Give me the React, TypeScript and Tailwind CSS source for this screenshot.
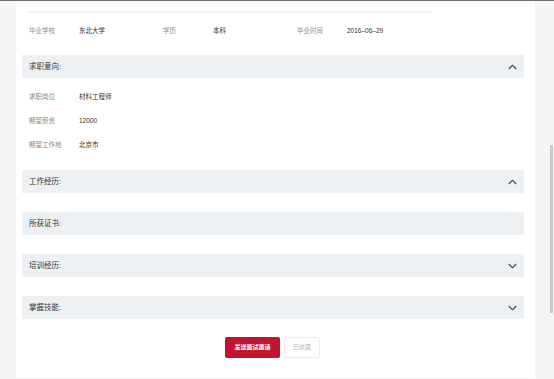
const font = "font-['Liberation_Sans','Noto_Sans_CJK_SC',sans-serif]";

const Chevron = ({ up }: { up?: boolean }) => (
  <svg width="9" height="6" viewBox="0 0 9 6" className="mr-[7px]">
    <path
      d={up ? "M0.8 5 L4.5 1.2 L8.2 5" : "M0.8 1 L4.5 4.8 L8.2 1"}
      fill="none"
      stroke="#3a3a3a"
      strokeWidth="1.1"
    />
  </svg>
);

const Header = ({ title, icon, className = "" }: { title: string; icon?: "up" | "down"; className?: string }) => (
  <div className={`ml-[6px] mr-[11px] h-[23px] bg-[#eef1f4] flex items-center justify-between pl-[7px] ${className}`}>
    <span className="text-[7.5px] text-[#333]">{title}</span>
    {icon && <Chevron up={icon === "up"} />}
  </div>
);

const Field = ({ label, value }: { label: string; value: string }) => (
  <div className="flex w-[134px] items-center">
    <span className="w-[50px] text-[6.5px] text-[#8a8a8a]">{label}</span>
    <span className="text-[6.5px] text-[#333]">{value}</span>
  </div>
);

const App = () => {
  return (
    <div className={`w-[554px] h-[379px] overflow-hidden bg-[#f4f5f7] border-t border-[#6e6e6e] flex ${font}`}>
      <div className="w-[16px]" />
      <div className="w-[519px] h-[377px] bg-white flex flex-col">
        <div className="mt-[10px] ml-[13px] w-[402px] h-[2px] bg-[#f0f1f3]" />

        <div className="mt-[8px] ml-[13px] h-[20px] flex items-center">
          <Field label="毕业学校" value="东北大学" />
          <Field label="学历" value="本科" />
          <Field label="毕业时间" value="2016–06–29" />
        </div>

        <Header title="求职意向:" icon="up" className="mt-[14px]" />

        <div className="mt-[7px] ml-[13px] flex flex-col">
          <div className="h-[24px] flex items-center"><Field label="求职岗位" value="材料工程师" /></div>
          <div className="h-[24px] flex items-center"><Field label="期望薪资" value="12000" /></div>
          <div className="h-[24px] flex items-center"><Field label="期望工作地" value="北京市" /></div>
        </div>

        <Header title="工作经历:" icon="up" className="mt-[13px]" />
        <Header title="所获证书:" className="mt-[19px]" />
        <Header title="培训经历:" icon="down" className="mt-[19px]" />
        <Header title="掌握技能:" icon="down" className="mt-[19px]" />

        <div className="mt-[18px] flex justify-center gap-[4px] pr-[6px]">
          <button className="w-[55px] h-[21px] rounded-[2px] bg-[#c0142f] text-white text-[6px] font-bold">
            发送面试邀请
          </button>
          <button className="w-[36px] h-[21px] rounded-[2px] border border-[#ececec] bg-white text-[#b8b8b8] text-[6px]">
            已收藏
          </button>
        </div>
      </div>
      <div className="relative flex-1">
        <div className="absolute left-[15px] top-[144px] w-[3px] h-[168px] bg-[#c9c9c9]" />
      </div>
    </div>
  );
};

export default App;
